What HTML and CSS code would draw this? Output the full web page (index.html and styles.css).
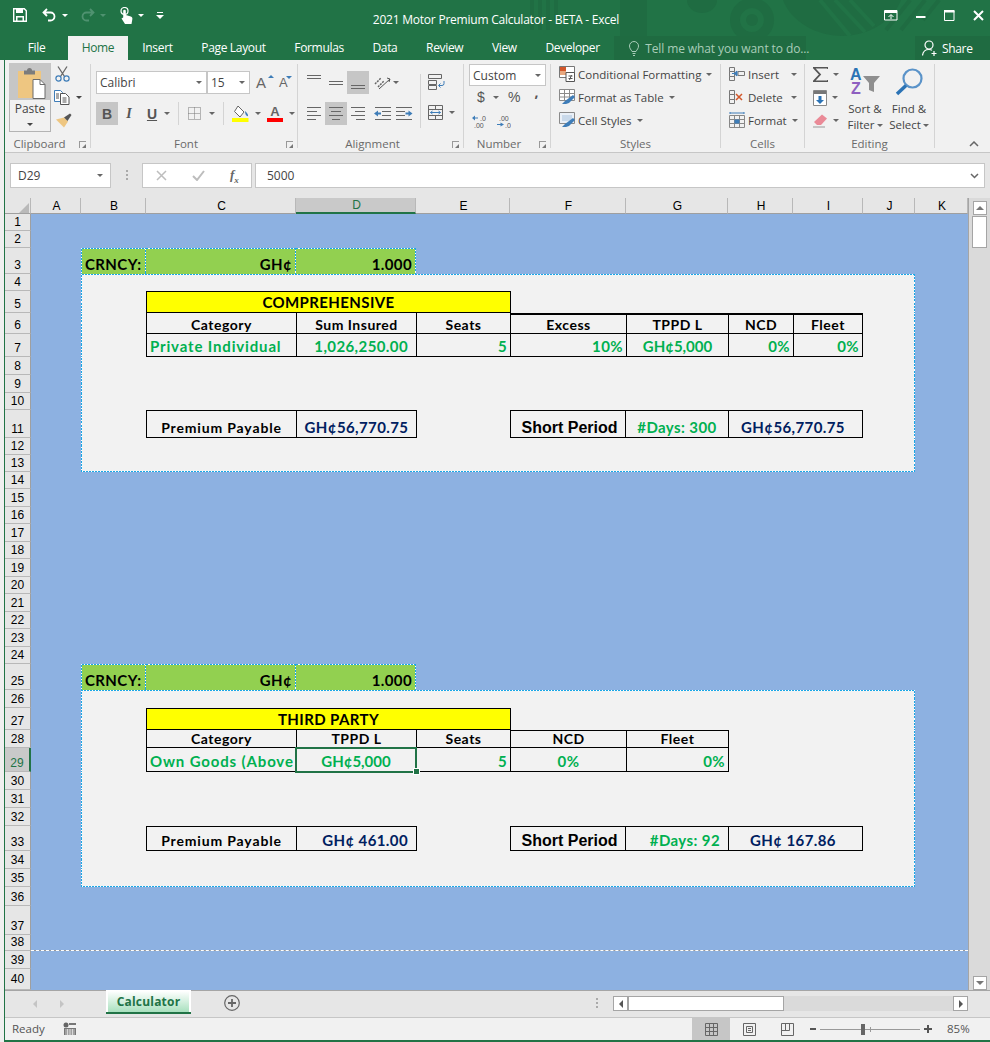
FILE: index.html
```html
<!DOCTYPE html>
<html lang="en">
<head>
  <meta charset="UTF-8" />
  <title>2021 Motor Premium Calculator - BETA - Excel</title>
  <link rel="stylesheet" href="styles.css">
</head>
<body>
  <div class="edge"></div>
  <div class="window">

    <!-- title bar -->
    <div class="titlebar">
      <svg class="pattern" width="985" height="36" viewBox="0 0 985 36">
        <g fill="#1f6c42">
          <path d="M525 0h4v30h-4zM533 0h4v30h-4zM541 0h4v30h-4zM549 0h4v20h-4z"/>
          <path d="M615 0h27v36h-27z"/>
          <path d="M682 0h30a15 13 0 0 1-30 0z"/>
          <path d="M747 -2a22 22 0 1 0 .1 0zM747 8a12 12 0 1 1-.1 0z"/>
          <circle cx="747" cy="20" r="6"/>
          <path d="M778 0h118c-8 22-34 36-59 36s-51-14-59-36z"/>
        </g>
        <g stroke="#217346" stroke-width="4" fill="none"><path d="M815 0l30 36M830 0l30 32M845 0l24 26"/></g>
        <g stroke="#1f6c42" stroke-width="4" fill="none"><path d="M905 0l-24 30M920 0l-24 30M934 0l-16 20"/></g>
      </svg>
      <div class="qat">
        <svg class="qat-save" width="14" height="14" viewBox="0 0 14 14"><path d="M.7.7h10.600l2 2v10.600H.7z" fill="none" stroke="#fff" stroke-width="1.400"/><path d="M3 1h7v4H3zM3 8h8v5H3z" fill="#fff"/><path d="M4.500 9.500h5v3h-5z" fill="#217346"/></svg>
        <svg class="qat-undo" width="15" height="14" viewBox="0 0 15 14"><path d="M5 1L1.500 4.500 5 8M2 4.500h6.500a4 4 0 0 1 0 8H6" fill="none" stroke="#fff" stroke-width="1.800"/></svg>
        <span class="caret caret-w qat-drop"></span>
        <svg class="qat-redo" width="15" height="14" viewBox="0 0 15 14"><path d="M10 1l3.500 3.500L10 8M13 4.500H6.500a4 4 0 0 0 0 8H9" fill="none" stroke="#4f9270" stroke-width="1.800"/></svg>
        <span class="caret caret-dim qat-drop"></span>
        <svg class="qat-touch" width="13" height="17" viewBox="0 0 13 17"><circle cx="4.500" cy="4" r="3.500" fill="none" stroke="#fff" stroke-width="1.200"/><path d="M3.200 4a1.300 1.300 0 0 1 2.600 0v4l5 1.500c1.500.5 1.800 1.500 1.500 3L11.500 17H5L1.500 11.500 3.200 10.500z" fill="#fff"/></svg>
        <span class="caret caret-w qat-drop"></span>
        <svg class="qat-more" width="8" height="7" viewBox="0 0 8 7"><path d="M1 .5h6" stroke="#fff"/><path d="M0 3h8L4 7z" fill="#fff"/></svg>
      </div>
      <div class="doc-title">2021 Motor Premium Calculator - BETA - Excel</div>
      <div class="win-btns">
        <svg width="14" height="11" viewBox="0 0 14 11"><path d="M.5.500h12.500v9.500H.5z" fill="none" stroke="#fff"/><path d="M1 1h12v2H1z" fill="#fff"/><path d="M4.500 7L7 4.500 9.500 7M7 5v4" fill="none" stroke="#fff"/></svg>
        <svg width="10" height="11" viewBox="0 0 10 11"><path d="M0 6h9.500v2H0z" fill="#fff"/></svg>
        <svg width="11" height="11" viewBox="0 0 11 11"><path d="M.5 1h9.500v9.500H.5z" fill="none" stroke="#fff"/><path d="M0 0h10.500v2.500H0z" fill="#fff"/></svg>
        <svg width="11" height="11" viewBox="0 0 11 11"><path d="M1 1l9 9M10 1l-9 9" stroke="#fff" stroke-width="2"/></svg>
      </div>
    </div>

    <!-- ribbon tabs -->
    <div class="tabs">
      <div class="tab tab-file">File</div>
      <div class="tab tab-active">Home</div>
      <div class="tab">Insert</div>
      <div class="tab">Page Layout</div>
      <div class="tab">Formulas</div>
      <div class="tab">Data</div>
      <div class="tab">Review</div>
      <div class="tab">View</div>
      <div class="tab">Developer</div>
      <div class="tellme">
        <svg width="10" height="15" viewBox="0 0 10 15"><path d="M3 10.500C2 8.500.5 7.500.5 5a4.500 4.500 0 0 1 9 0c0 2.500-1.500 3.500-2.500 5.500zM3.500 12.500h3M4 14.500h2" fill="none" stroke="#a9cdb9"/></svg>
        <span>Tell me what you want to do...</span>
      </div>
      <div class="share">
        <svg width="16" height="16" viewBox="0 0 16 16"><circle cx="7" cy="5" r="4" fill="none" stroke="#fff" stroke-width="1.200"/><path d="M.5 15.500c.5-4 3-6 6.500-6 1.200 0 2.200.3 3 .8M12 11v5M9.500 13.500h5" fill="none" stroke="#fff" stroke-width="1.200"/></svg>
        <span>Share</span>
      </div>
    </div>

    <!-- ribbon -->
    <div class="ribbon">

      <div class="group g-clipboard">
        <div class="group-body clip-body">
          <div class="paste">
            <div class="paste-top">
              <svg width="30" height="31" viewBox="0 0 30 31"><path d="M1 3h23v27H1z" fill="#eec681"/><path d="M7 1.500h3a2.500 2.500 0 0 1 5 0h3v4H7z" fill="#7c7c7c" transform="translate(0 1)"/><path d="M16 11.500h7l5 5v14H16z" fill="#fff" stroke="#6b6b6b"/><path d="M23 11.500v5h5" fill="none" stroke="#6b6b6b"/></svg>
            </div>
            <div class="paste-bottom"><span>Paste</span><span class="caret caret-d"></span></div>
          </div>
          <div class="clip-tools">
            <svg class="ci" width="15" height="16" viewBox="0 0 15 16"><path d="M3 .5l6.500 10M12 .5L5.500 10.500" stroke="#666" stroke-width="1.300" fill="none"/><circle cx="3.500" cy="12.500" r="2.600" fill="none" stroke="#3e7db8" stroke-width="1.200"/><circle cx="11.500" cy="12.500" r="2.600" fill="none" stroke="#3e7db8" stroke-width="1.200"/></svg>
            <div class="ci-row">
              <svg width="16" height="15" viewBox="0 0 16 15"><path d="M.5.500h6l2 2v9H.5z" fill="#fff" stroke="#3e7db8"/><path d="M6.500 3.500h5l3.500 3.500v7.500H6.500z" fill="#fff" stroke="#555"/><path d="M8.500 8h4M8.500 10h4M8.500 12h4M2 4h3M2 6h3M2 8h3" stroke="#555"/></svg>
              <span class="caret caret-d copy-drop"></span>
            </div>
            <svg class="ci" width="17" height="15" viewBox="0 0 17 15"><path d="M9 4l4 4-4 6-8-8z" fill="#eec681" transform="translate(0 .5)"/><path d="M9 4.500l6-4 1.500 1.500-4 6z" fill="#555"/></svg>
          </div>
        </div>
        <div class="group-label">Clipboard</div>
        <span class="launcher"></span>
      </div>

      <div class="group g-font">
        <div class="group-body font-body">
          <div class="tool-row">
            <div class="combo combo-font"><span>Calibri</span><span class="caret caret-g"></span></div>
            <div class="combo combo-size"><span>15</span><span class="caret caret-g"></span></div>
            <div class="font-grow">A<span class="caret caret-up"></span></div>
            <div class="font-shrink">A<span class="caret caret-blue"></span></div>
          </div>
          <div class="tool-row row-two">
            <div class="btn btn-on fmt-b">B</div>
            <div class="btn fmt-i">I</div>
            <div class="btn fmt-u">U</div>
            <span class="caret caret-g"></span>
            <span class="vsep vsep-a"></span>
            <svg class="borders" width="13" height="13" viewBox="0 0 13 13"><path d="M.5.500h12v12H.5zM6.500.500v12M.5 6.500h12" fill="none" stroke="#777" stroke-dasharray="1 1"/></svg>
            <span class="caret caret-g border-drop"></span>
            <span class="vsep vsep-b"></span>
            <svg class="fill-ic" width="17" height="17" viewBox="0 0 17 17"><path d="M6 1l6 6-4 5-5.500-5.500z" fill="#fff" stroke="#666"/><path d="M13 6c2 2 3 3 3 4.500S13 11 13 6z" fill="#3e7db8"/><path d="M0 13h16.500v4H0z" fill="#ffff00"/></svg>
            <span class="caret caret-g fill-drop"></span>
            <div class="color-a"><span>A</span><i></i></div>
            <span class="caret caret-g color-drop"></span>
          </div>
        </div>
        <div class="group-label">Font</div>
        <span class="launcher"></span>
      </div>

      <div class="group g-align">
        <div class="group-body align-body">
          <div class="align-main">
            <div class="tool-row">
              <div class="btn"><svg width="14" height="9" viewBox="0 0 14 9" class="v-top"><path d="M0 .5h14M0 3.500h14" stroke="#666"/></svg></div>
              <div class="btn"><svg width="14" height="9" viewBox="0 0 14 9"><path d="M0 3.500h14M0 6.500h14" stroke="#666"/></svg></div>
              <div class="btn btn-on"><svg width="14" height="9" viewBox="0 0 14 9" class="v-bot"><path d="M0 4.500h14M0 7.500h14" stroke="#666"/></svg></div>
              <div class="btn orient"><svg width="18" height="15" viewBox="0 0 18 15"><path d="M2 9l6-6M5 12l6-6" stroke="#666" stroke-width="1.500" stroke-dasharray="2 1"/><path d="M6 14L17 4M14 3l3 1-1 3" fill="none" stroke="#555"/></svg></div>
              <span class="caret caret-g"></span>
            </div>
            <div class="tool-row row-two">
              <div class="btn"><svg width="14" height="13" viewBox="0 0 14 13"><path d="M0 .5h14M0 4.500h10M0 8.500h14M0 12.500h9" stroke="#666"/></svg></div>
              <div class="btn btn-on"><svg width="14" height="13" viewBox="0 0 14 13"><path d="M0 .5h14M2 4.500h10M0 8.500h14M3 12.500h8" stroke="#666"/></svg></div>
              <div class="btn"><svg width="14" height="13" viewBox="0 0 14 13"><path d="M0 .5h14M4 4.500h10M0 8.500h14M5 12.500h9" stroke="#666"/></svg></div>
              <div class="btn btn-gap"><svg width="17" height="13" viewBox="0 0 17 13"><path d="M1 .5h16M8 4.500h9M8 8.500h9M1 12.500h16" stroke="#666"/><path d="M0 6.500l4-3v2h3v2H4v2z" fill="#3e7db8"/></svg></div>
              <div class="btn"><svg width="17" height="13" viewBox="0 0 17 13"><path d="M0 .5h16M0 4.500h9M0 8.500h9M0 12.500h16" stroke="#666"/><path d="M17 6.500l-4-3v2h-3v2h3v2z" fill="#3e7db8" transform="translate(-.5 0)"/></svg></div>
            </div>
          </div>
          <span class="vsep vsep-c"></span>
          <div class="align-side">
            <svg width="17" height="16" viewBox="0 0 17 16"><path d="M.5.500h13v4H.5zM.5 6.500h8v4H.5zM.5 11.500h8v4H.5z" fill="none" stroke="#666"/><path d="M16 7v2.500a2 2 0 0 1-2 2h-3M12.500 9.500l-2 2 2 2" fill="none" stroke="#3e7db8"/></svg>
            <div class="merge-row">
              <svg width="15" height="15" viewBox="0 0 15 15"><path d="M.5.500h14v14H.5zM.5 4.500h14M.5 10.500h14M7.500.5v4M7.500 10.500v4" fill="none" stroke="#666"/><path d="M2.500 7.500h10M4.500 6l-2 1.500 2 1.500M10.500 6l2 1.500-2 1.500" fill="none" stroke="#3e7db8"/></svg>
              <span class="caret caret-g"></span>
            </div>
          </div>
        </div>
        <div class="group-label">Alignment</div>
        <span class="launcher"></span>
      </div>

      <div class="group g-number">
        <div class="group-body number-body">
          <div class="combo combo-num"><span>Custom</span><span class="caret caret-g"></span></div>
          <div class="num-row">
            <span class="num-dollar">$</span><span class="caret caret-g"></span>
            <span class="num-pct">%</span><span class="num-comma">,</span>
          </div>
          <div class="num-row num-dec">
            <svg width="16" height="13" viewBox="0 0 16 13"><path d="M0 3l3-2.500v2h3v1H3v2z" fill="#3e7db8"/><text x="8" y="5.500" class="dec-text">.0</text><text x="2" y="12.500" class="dec-text">.00</text></svg>
            <svg width="14" height="13" viewBox="0 0 14 13"><text x="2" y="5.500" class="dec-text">.00</text><path d="M0 9h3.500V7.500L7 9.500l-3.500 2V10H0z" fill="#3e7db8"/><text x="8" y="12.500" class="dec-text">.0</text></svg>
          </div>
        </div>
        <div class="group-label">Number</div>
        <span class="launcher"></span>
      </div>

      <div class="group g-styles">
        <div class="group-body list-body">
          <div class="list-item">
            <svg width="16" height="16" viewBox="0 0 16 16"><path d="M.5.500h15v11H.5z" fill="#fff" stroke="#777"/><path d="M1 1h6v4H1z" fill="#d2572a"/><path d="M1 5h6v4H1z" fill="#e8a77e"/><path d="M7 6.500h8.500v9H7z" fill="#fff" stroke="#555"/><path d="M9.500 10h4M9.500 12.500h4M12.500 9l-2 5" stroke="#555"/></svg>
            <span>Conditional Formatting</span><span class="caret caret-g"></span>
          </div>
          <div class="list-item">
            <svg width="16" height="16" viewBox="0 0 16 16"><path d="M.5.500h15v11H.5zM.5 4.500h15M5.500.500v11M10.500.500v11M.5 8h15" fill="#fff" stroke="#8a8a8a"/><path d="M14 6l2 2-6 6-3 1H3l3-3z" fill="#3e7db8"/></svg>
            <span>Format as Table</span><span class="caret caret-g"></span>
          </div>
          <div class="list-item">
            <svg width="16" height="16" viewBox="0 0 16 16"><path d="M.5.500h15v11H.5z" fill="#eaf0f7" stroke="#8a8a8a"/><path d="M3 3h10v6H3z" fill="#c9d9ea"/><path d="M14 6l2 2-6 6-3 1H3l3-3z" fill="#3e7db8"/></svg>
            <span>Cell Styles</span><span class="caret caret-g"></span>
          </div>
        </div>
        <div class="group-label">Styles</div>
      </div>

      <div class="group g-cells">
        <div class="group-body list-body">
          <div class="list-item">
            <svg width="16" height="16" viewBox="0 0 16 16"><path d="M.5 1.500h5v4h-5zM.5 5.500h5v5h-5zM.5 10.500h5v4h-5zM5.500 5.500v5" fill="none" stroke="#777"/><path d="M9 5.500h6.500v4H9z" fill="none" stroke="#777"/><path d="M3 7.500h3M8 7.500l-3 0M8 5l-3 2.500 3 2.500z" fill="#3e7db8" stroke="#3e7db8"/></svg>
            <span class="cell-text">Insert</span><span class="caret caret-g"></span>
          </div>
          <div class="list-item">
            <svg width="16" height="16" viewBox="0 0 16 16"><path d="M.5 1.500h5v4h-5zM.5 5.500h5v5h-5zM.5 10.500h5v4h-5z" fill="none" stroke="#777"/><path d="M7 5l6 6M13 5l-6 6" stroke="#d2572a" stroke-width="1.500"/></svg>
            <span class="cell-text">Delete</span><span class="caret caret-g"></span>
          </div>
          <div class="list-item">
            <svg width="16" height="16" viewBox="0 0 16 16"><path d="M.5 3.500h15v12H.5zM.5 7.500h15M.5 11.500h15M5.500 3.500v12M10.500 3.500v12" fill="none" stroke="#888"/><path d="M5.500 7.500h5v4h-5z" fill="#3e7db8"/><path d="M1 1h14M1 0v2M15 0v2" stroke="#3e7db8"/></svg>
            <span>Format</span><span class="caret caret-g"></span>
          </div>
        </div>
        <div class="group-label">Cells</div>
      </div>

      <div class="group g-edit">
        <div class="group-body edit-body">
          <div class="edit-col">
            <div class="edit-row"><svg width="15" height="15" viewBox="0 0 15 15"><path d="M15 2V.5H.5L7 7.500.5 14.500H15V13" fill="none" stroke="#555" stroke-width="1.800"/></svg><span class="caret caret-g"></span></div>
            <div class="edit-row"><svg width="14" height="16" viewBox="0 0 14 16"><path d="M.5.500h13v15H.5z" fill="#fff" stroke="#888"/><path d="M1 1h12v3H1z" fill="#777"/><path d="M5.500 6h3v4H11l-4 4-4-4h2.500z" fill="#2b73b5"/></svg><span class="caret caret-g"></span></div>
            <div class="edit-row"><svg width="15" height="14" viewBox="0 0 15 14"><path d="M9 .5l5 4-6 6.500H4L1 8z" fill="#ea8a97"/><path d="M0 13h12" stroke="#999"/></svg><span class="caret caret-g"></span></div>
          </div>
          <div class="big-tool">
            <svg class="sort-ic" width="31" height="28" viewBox="0 0 31 28"><text x="0" y="12" class="az az-a">A</text><text x="1" y="26" class="az az-z">Z</text><path d="M13 8h17l-6 7v9l-5-2v-7z" fill="#8f8f8f"/></svg>
            <span>Sort &amp;</span>
            <span>Filter<i class="caret caret-g"></i></span>
          </div>
          <div class="big-tool find">
            <svg width="28" height="28" viewBox="0 0 28 28"><circle cx="17.500" cy="10.500" r="9" fill="none" stroke="#5a93c9" stroke-width="2.200"/><path d="M11 17.500L2 26" stroke="#2b73b5" stroke-width="3.500"/></svg>
            <span>Find &amp;</span>
            <span>Select<i class="caret caret-g"></i></span>
          </div>
        </div>
        <div class="group-label">Editing</div>
      </div>

      <svg class="collapse" width="10" height="6" viewBox="0 0 10 6"><path d="M1 5l4-4 4 4" fill="none" stroke="#666" stroke-width="1.500"/></svg>
    </div>

    <!-- formula bar -->
    <div class="formula">
      <div class="namebox"><span>D29</span><span class="caret caret-g"></span></div>
      <div class="grip"></div>
      <div class="fx-box">
        <svg width="11" height="11" viewBox="0 0 11 11"><path d="M1 1l9 9M10 1l-9 9" stroke="#bdbdbd" stroke-width="1.500"/></svg>
        <svg width="13" height="11" viewBox="0 0 13 11"><path d="M1 6l4 4 7-9" fill="none" stroke="#bdbdbd" stroke-width="2"/></svg>
        <span class="fx">f<sub>x</sub></span>
      </div>
      <div class="fx-input"><span>5000</span><svg width="9" height="6" viewBox="0 0 9 6"><path d="M1 1l3.500 3.500L8 1" fill="none" stroke="#666" stroke-width="1.500"/></svg></div>
    </div>

    <!-- sheet -->
    <div class="sheet-wrap">
      <table class="sheet">
        <colgroup>
          <col class="c-rh"><col class="c-a"><col class="c-b"><col class="c-c"><col class="c-d"><col class="c-e"><col class="c-f"><col class="c-g"><col class="c-h"><col class="c-i"><col class="c-j"><col class="c-k">
        </colgroup>
        <tr class="r16">
          <td class="ch corner"><svg width="10" height="10" viewBox="0 0 10 10"><path d="M10 0v10H0z" fill="#b9b9b9"/></svg></td>
          <td class="ch">A</td><td class="ch">B</td><td class="ch">C</td><td class="ch ch-on">D</td><td class="ch">E</td><td class="ch">F</td><td class="ch">G</td><td class="ch">H</td><td class="ch">I</td><td class="ch">J</td><td class="ch">K</td>
        </tr>
        <tr class="r17"><td class="rh">1</td><td colspan="11"></td></tr>
        <tr class="r17"><td class="rh">2</td><td colspan="11"></td></tr>
        <tr class="r26">
          <td class="rh">3</td><td></td>
          <td class="cur dt dl dr">CRNCY:</td><td class="cur dt dr right">GH¢</td><td class="cur dt dr right">1.000</td>
          <td colspan="7"></td>
        </tr>
        <tr class="r17"><td class="rh">4</td><td></td><td class="pan dt dl dr" colspan="9"></td><td></td></tr>
        <tr class="r22">
          <td class="rh">5</td><td></td><td class="pan dl"></td>
          <td class="banner bt bl bb" colspan="3">COMPREHENSIVE</td>
          <td class="pan bl" colspan="4"></td><td class="pan dr"></td><td></td>
        </tr>
        <tr class="r21">
          <td class="rh">6</td><td></td><td class="pan dl"></td>
          <td class="hd bl bb">Category</td><td class="hd bl bb">Sum Insured</td><td class="hd bl bb">Seats</td>
          <td class="hd bt2 bl bb">Excess</td><td class="hd bt2 bl bb">TPPD L</td><td class="hd bt2 bl bb">NCD</td><td class="hd bt2 bl bb br">Fleet</td>
          <td class="pan dr"></td><td></td>
        </tr>
        <tr class="r23">
          <td class="rh">7</td><td></td><td class="pan dl"></td>
          <td class="val wide bl bb">Private Individual</td><td class="val bl bb right pad8">1,026,250.00</td><td class="val bl bb right">5</td>
          <td class="val bl bb right">10%</td><td class="val tight bl bb center">GH¢5,000</td><td class="val bl bb right">0%</td><td class="val bl bb br right">0%</td>
          <td class="pan dr"></td><td></td>
        </tr>
        <tr class="r18"><td class="rh">8</td><td></td><td class="pan dl dr" colspan="9"></td><td></td></tr>
        <tr class="r18"><td class="rh">9</td><td></td><td class="pan dl dr" colspan="9"></td><td></td></tr>
        <tr class="r17"><td class="rh">10</td><td></td><td class="pan dl dr" colspan="9"></td><td></td></tr>
        <tr class="r28">
          <td class="rh">11</td><td></td><td class="pan dl"></td>
          <td class="lbl wide bt bl bb center">Premium Payable</td><td class="total bt bl bb center">GH¢56,770.75</td>
          <td class="pan bl"></td>
          <td class="period bx center">Short Period</td><td class="val bt bb center">#Days: 300</td><td class="total bt bl bb br center pad8" colspan="2">GH¢56,770.75</td>
          <td class="pan dr"></td><td></td>
        </tr>
        <tr class="r17"><td class="rh">12</td><td></td><td class="pan dl dr" colspan="9"></td><td></td></tr>
        <tr class="r17"><td class="rh">13</td><td></td><td class="pan dl dr db" colspan="9"></td><td></td></tr>
        <tr class="r17"><td class="rh">14</td><td colspan="11"></td></tr>
        <tr class="r18"><td class="rh">15</td><td colspan="11"></td></tr>
        <tr class="r17"><td class="rh">16</td><td colspan="11"></td></tr>
        <tr class="r18"><td class="rh">17</td><td colspan="11"></td></tr>
        <tr class="r17"><td class="rh">18</td><td colspan="11"></td></tr>
        <tr class="r18"><td class="rh">19</td><td colspan="11"></td></tr>
        <tr class="r17"><td class="rh">20</td><td colspan="11"></td></tr>
        <tr class="r18"><td class="rh">21</td><td colspan="11"></td></tr>
        <tr class="r17"><td class="rh">22</td><td colspan="11"></td></tr>
        <tr class="r18"><td class="rh">23</td><td colspan="11"></td></tr>
        <tr class="r17"><td class="rh">24</td><td colspan="11"></td></tr>
        <tr class="r26">
          <td class="rh">25</td><td></td>
          <td class="cur dt dl dr">CRNCY:</td><td class="cur dt dr right">GH¢</td><td class="cur dt dr right">1.000</td>
          <td colspan="7"></td>
        </tr>
        <tr class="r18"><td class="rh">26</td><td></td><td class="pan dt dl dr" colspan="9"></td><td></td></tr>
        <tr class="r22">
          <td class="rh">27</td><td></td><td class="pan dl"></td>
          <td class="banner bt bl bb" colspan="3">THIRD PARTY</td>
          <td class="pan bl" colspan="4"></td><td class="pan dr"></td><td></td>
        </tr>
        <tr class="r18">
          <td class="rh">28</td><td></td><td class="pan dl"></td>
          <td class="hd bl bb">Category</td><td class="hd bl bb">TPPD L</td><td class="hd bl bb">Seats</td>
          <td class="hd bt bl bb">NCD</td><td class="hd bt bl bb">Fleet</td>
          <td class="pan bl" colspan="2"></td><td class="pan dr"></td><td></td>
        </tr>
        <tr class="r24">
          <td class="rh rh-on">29</td><td></td><td class="pan dl"></td>
          <td class="val wide bl bb">Own Goods (Above</td><td class="val tight bb center active">GH¢5,000<span class="handle"></span></td><td class="val bl bb right">5</td>
          <td class="val bl bb center">0%</td><td class="val bl bb right">0%</td>
          <td class="pan bl" colspan="2"></td><td class="pan dr"></td><td></td>
        </tr>
        <tr class="r18"><td class="rh">30</td><td></td><td class="pan dl dr" colspan="9"></td><td></td></tr>
        <tr class="r18"><td class="rh">31</td><td></td><td class="pan dl dr" colspan="9"></td><td></td></tr>
        <tr class="r18"><td class="rh">32</td><td></td><td class="pan dl dr" colspan="9"></td><td></td></tr>
        <tr class="r25">
          <td class="rh">33</td><td></td><td class="pan dl"></td>
          <td class="lbl wide bt bl bb center">Premium Payable</td><td class="total bt bl bb right pad8">GH¢ 461.00</td>
          <td class="pan bl"></td>
          <td class="period bx center">Short Period</td><td class="val bt bb right pad8">#Days: 92</td><td class="total bt bl bb br center pad8" colspan="2">GH¢ 167.86</td>
          <td class="pan dr"></td><td></td>
        </tr>
        <tr class="r18"><td class="rh">34</td><td></td><td class="pan dl dr" colspan="9"></td><td></td></tr>
        <tr class="r18"><td class="rh">35</td><td></td><td class="pan dl dr db" colspan="9"></td><td></td></tr>
        <tr class="r19"><td class="rh">36</td><td colspan="11"></td></tr>
        <tr class="r29"><td class="rh">37</td><td colspan="11"></td></tr>
        <tr class="r16"><td class="rh">38</td><td class="page-break" colspan="11"></td></tr>
        <tr class="r18"><td class="rh">39</td><td colspan="11"></td></tr>
        <tr class="r21"><td class="rh rh-last">40</td><td colspan="11"></td></tr>
      </table>
      <div class="vscroll">
        <div class="sb-btn"><span class="caret caret-up-g"></span></div>
        <div class="sb-thumb"></div>
        <div class="sb-track"></div>
        <div class="sb-btn"><span class="caret caret-d-g"></span></div>
      </div>
    </div>

    <!-- sheet tabs -->
    <div class="tabbar">
      <span class="nav-l"></span><span class="nav-r"></span>
      <div class="sheet-tab"><span>Calculator</span></div>
      <svg class="add-sheet" width="16" height="16" viewBox="0 0 16 16"><circle cx="8" cy="8" r="7.300" fill="none" stroke="#666" stroke-width="1.200"/><path d="M8 4v8M4 8h8" stroke="#666" stroke-width="1.800"/></svg>
      <div class="hgrip"></div>
      <div class="hscroll">
        <div class="hs-btn"><span class="tri-l"></span></div>
        <div class="hs-thumb"></div>
        <div class="hs-track"></div>
        <div class="hs-btn"><span class="tri-r"></span></div>
      </div>
    </div>

    <!-- status bar -->
    <div class="status">
      <span class="ready">Ready</span>
      <svg class="macro" width="13" height="13" viewBox="0 0 13 13"><circle cx="3" cy="3" r="2.500" fill="#666"/><path d="M6 1h7v2H6zM1 6h12v7H1z" fill="#777"/><path d="M2 8h10M2 10h10M2 12h10M4.500 7v6M7 7v6M9.500 7v6" stroke="#f1f1f1" stroke-width=".7"/></svg>
      <div class="views">
        <div class="view view-on"><svg width="13" height="13" viewBox="0 0 13 13"><path d="M.5.500h12v12H.5zM4.500.500v12M8.500.500v12M.5 4.500h12M.5 8.500h12" fill="none" stroke="#666"/></svg></div>
        <div class="view"><svg width="13" height="13" viewBox="0 0 13 13"><path d="M.5.500h12v12H.5z" fill="none" stroke="#666"/><path d="M3.500 3.500h6v6h-6zM5 5.500h3M5 7.500h3" fill="none" stroke="#666"/></svg></div>
        <div class="view"><svg width="13" height="13" viewBox="0 0 13 13"><path d="M.5.500h12v12H.5zM.5 7.500h8V.5M4.500.500v7" fill="none" stroke="#666"/></svg></div>
      </div>
      <div class="zoom-ctl">
        <span class="z-minus"></span>
        <div class="z-slider"><i class="z-thumb"></i><i class="z-tick"></i></div>
        <span class="z-plus"></span>
      </div>
      <span class="pct">85%</span>
    </div>
  </div>
</body>
</html>
```

FILE: styles.css
```css
* {
  box-sizing: border-box;
}

body {
  margin: 0;
  width: 990px;
  height: 1042px;
  overflow: hidden;
  display: flex;
  font-family: "Open Sans", sans-serif;
  color: #444;
  background: #f4f4f4;
}

svg {
  display: block;
  flex: none;
}

.edge {
  width: 4px;
  background: linear-gradient(to bottom, #217346 60px, #f0f0f0 60px);
}

.window {
  width: 986px;
  height: 1042px;
  display: flex;
  flex-direction: column;
  border-left: 1px solid #217346;
}

/* carets */
.caret {
  display: inline-block;
  flex: none;
  width: 0;
  height: 0;
  border-left: 3px solid transparent;
  border-right: 3px solid transparent;
  border-top: 3px solid #666;
}
.caret-w { border-top-color: #fff; }
.caret-dim { border-top-color: #4f9270; }
.caret-d { border-top-color: #444; }
.caret-up-g {
  border-top: 0;
  border-bottom: 4px solid #777;
  border-left-width: 4px;
  border-right-width: 4px;
}
.caret-d-g {
  border-top: 4px solid #777;
  border-left-width: 4px;
  border-right-width: 4px;
}

/* title bar */
.titlebar {
  position: relative;
  height: 36px;
  flex: none;
  background: #217346;
  display: grid;
  grid-template-columns: 1fr auto 1fr;
  color: #fff;
}
.pattern {
  position: absolute;
  top: 0;
  left: 0;
}
.qat {
  position: relative;
  display: flex;
  align-items: center;
  height: 30px;
  padding-left: 8px;
}
.qat-undo { margin-left: 15px; }
.qat-redo { margin-left: 12px; }
.qat-touch { margin-left: 14px; }
.qat-drop { margin-left: 5px; }
.qat-more { margin-left: 12px; }

.doc-title {
  position: relative;
  padding-right: 3px;
  font-size: 12px;
  line-height: 40px;
  letter-spacing: -.23px;
}
.win-btns {
  position: relative;
  display: flex;
  align-items: center;
  justify-content: flex-end;
  gap: 18px;
  height: 30px;
  padding-right: 6px;
}

/* tabs */
.tabs {
  height: 24px;
  flex: none;
  display: flex;
  background: #217346;
  font-size: 12px;
  letter-spacing: -.33px;
  color: #fff;
}
.tab {
  padding: 0 14.300px;
  line-height: 24px;
}
.tab-file {
  width: 63px;
  text-align: center;
  padding: 0;
}
.tab-active {
  background: #f1f1f1;
  color: #217346;
  width: 60px;
  text-align: center;
  padding: 0;
}
.tellme {
  display: flex;
  align-items: center;
  gap: 6px;
  width: 192px;
  padding-left: 15px;
  background: #1f6b41;
  color: #a9cdb9;
  white-space: nowrap;
  letter-spacing: -.1px;
}
.share {
  margin-left: auto;
  width: 75px;
  display: flex;
  align-items: center;
  gap: 4px;
  padding-left: 7px;
  background: #1f6b41;
}

/* ribbon */
.ribbon {
  position: relative;
  height: 93px;
  flex: none;
  display: flex;
  padding-top: 4px;
  background: #f1f1f1;
  border-bottom: 1px solid #c6c6c6;
  font-size: 12px;
}
.group {
  position: relative;
  height: 84px;
  display: flex;
  flex-direction: column;
  border-right: 1px solid #d4d4d4;
}
.group-body {
  flex: 1;
  min-height: 0;
}
.group-label {
  height: 16px;
  margin-bottom: -4px;
  line-height: 16px;
  text-align: center;
  font-size: 11.500px;
  color: #6a6a6a;
}
.g-clipboard .group-label,
.g-font .group-label,
.g-align .group-label,
.g-number .group-label {
  padding-right: 16px;
}
.launcher {
  position: absolute;
  right: 4px;
  bottom: 0;
  width: 7px;
  height: 7px;
  border-left: 1px solid #999;
  border-top: 1px solid #999;
}
.launcher::after {
  content: "";
  position: absolute;
  right: 0;
  bottom: 0;
  border-left: 4px solid transparent;
  border-bottom: 4px solid #777;
}
.g-clipboard { width: 86px; }
.g-font { width: 207px; }
.g-align { width: 166px; }
.g-number { width: 87px; }
.g-styles { width: 170px; }
.g-cells { width: 84px; }
.g-edit { width: 130px; }

.tool-row {
  display: flex;
  align-items: center;
  height: 23px;
}
.row-two { margin-top: 8px; }

.btn {
  width: 22px;
  height: 23px;
  flex: none;
  display: flex;
  align-items: center;
  justify-content: center;
  font-family: "Liberation Serif", serif;
  font-size: 14px;
  color: #555;
}
.btn-on { background: #c6c6c6; }
.btn-gap { margin-left: 2px; }
.v-top { margin-bottom: 6px; }
.v-bot { margin-top: 6px; }
.fmt-b {
  font-family: "Liberation Sans", sans-serif;
  font-weight: bold;
}
.fmt-i { font-style: italic; font-weight: bold; }
.fmt-u {
  width: 24px;
  font-family: "Liberation Sans", sans-serif;
  font-weight: bold;
  text-decoration: underline;
}

.vsep {
  width: 1px;
  height: 23px;
  flex: none;
  background: #d4d4d4;
}
.vsep-a { margin-left: 8px; }
.vsep-b { margin-left: 8px; }
.vsep-c { height: 54px; margin: 3px 4px 0 0; }

/* clipboard */
.clip-body {
  display: flex;
  padding-left: 4px;
}
.paste {
  width: 42px;
  height: 69px;
  margin-top: -1px;
}
.paste-top {
  height: 37px;
  padding: 5px 0 0 8px;
  background: #c6c6c6;
}
.paste-bottom {
  height: 32px;
  display: flex;
  flex-direction: column;
  align-items: center;
  gap: 6px;
  padding-top: 1px;
  border: 1px solid #b4b4b4;
  border-top: 0;
  line-height: 16px;
}
.clip-tools {
  display: flex;
  flex-direction: column;
  align-items: flex-start;
  gap: 8px;
  padding: 2px 0 0 3px;
}
.clip-tools .ci { margin-left: 1px; }
.ci-row {
  display: flex;
  align-items: center;
}
.copy-drop { margin-left: 6px; }

/* font */
.font-body { padding: 7px 0 0 5px; }
.combo {
  height: 23px;
  display: flex;
  align-items: center;
  justify-content: space-between;
  background: #fff;
  border: 1px solid #c6c6c6;
  padding: 0 4px 0 3px;
}
.combo-font { width: 111px; }
.combo-size { width: 43px; }
.font-grow,
.font-shrink {
  position: relative;
  font-family: "Liberation Sans", sans-serif;
  color: #666;
}
.font-grow { margin-left: 6px; width: 18px; font-size: 15px; }
.font-shrink { margin-left: 5px; width: 13px; font-size: 13px; }
.font-grow .caret,
.font-shrink .caret {
  position: absolute;
  top: 1px;
  right: 0;
}
.caret-up {
  border-top: 0;
  border-bottom: 3px solid #3e7db8;
}
.caret-blue { border-top-color: #3e7db8; }

.borders { margin-left: 9px; }
.border-drop { margin-left: 8px; }
.fill-ic { margin-left: 8px; }
.fill-drop { margin-left: 6px; }
.color-a {
  margin-left: 6px;
  width: 16px;
  text-align: center;
  font-family: "Liberation Sans", sans-serif;
  font-weight: bold;
  font-size: 13px;
  line-height: 13px;
  color: #666;
}
.color-a i {
  display: block;
  height: 4px;
  background: #f00;
}
.color-drop { margin-left: 6px; }

/* alignment */
.align-body {
  display: flex;
  padding: 7px 0 0 5px;
}
.align-main { width: 117px; }
.orient { margin-left: 2px; }
.align-side {
  display: flex;
  flex-direction: column;
  gap: 15px;
  padding-top: 3px;
  margin-left: 3px;
}
.merge-row {
  display: flex;
  align-items: center;
  gap: 6px;
}

/* number */
.number-body { padding-left: 5px; }
.combo-num {
  width: 77px;
  height: 22px;
  font-size: 12px;
}
.num-row {
  display: flex;
  align-items: center;
  height: 22px;
  margin-top: 0;
  padding-left: 8px;
  font-size: 14px;
  color: #555;
}
.num-dollar { width: 16px; font-family: "Liberation Sans", sans-serif; }
.num-pct { margin-left: 9px; font-family: "Liberation Sans", sans-serif; }
.num-comma {
  margin: -10px 0 0 14px;
  font-weight: bold;
  line-height: 12px;
}
.num-dec {
  padding-left: 3px;
  gap: 9px;
  margin-top: 2px;
}
.dec-text {
  font-family: "Liberation Sans", sans-serif;
  font-size: 7px;
  fill: #555;
}

/* lists in styles and cells */
.list-body {
  display: flex;
  flex-direction: column;
  gap: 7px;
  padding: 2px 0 0 8px;
}
.list-item {
  display: flex;
  align-items: center;
  gap: 3px;
  height: 16px;
  white-space: nowrap;
  font-size: 11.500px;
}
.list-item .caret { margin-left: 2px; }
.cell-text { width: 38px; }

/* editing */
.edit-body {
  display: flex;
  padding-left: 8px;
}
.edit-col {
  display: flex;
  flex-direction: column;
  gap: 8px;
  padding-top: 3px;
  width: 30px;
}
.edit-row {
  display: flex;
  align-items: center;
  gap: 5px;
  height: 15px;
}
.big-tool {
  display: flex;
  flex-direction: column;
  align-items: center;
  width: 44px;
  padding-top: 4px;
  font-size: 11.500px;
  line-height: 16px;
  white-space: nowrap;
}
.big-tool svg { margin-bottom: 5px; }
.big-tool .caret {
  margin-left: 2px;
  vertical-align: 2px;
}
.sort-ic { overflow: visible; }
.az {
  font-family: "Liberation Sans", sans-serif;
  font-weight: bold;
  font-size: 16px;
}
.az-a { fill: #2b73b5; }
.az-z { fill: #8e5fc0; }
.collapse {
  position: absolute;
  right: 11px;
  bottom: 5px;
}

/* formula bar */
.formula {
  height: 45px;
  flex: none;
  display: flex;
  padding: 10px 5px 0 5px;
  background: #e6e6e6;
  font-size: 12px;
}
.namebox {
  width: 101px;
  height: 25px;
  display: flex;
  align-items: center;
  justify-content: space-between;
  padding: 0 7px;
  background: #fff;
  border: 1px solid #c6c6c6;
}
.grip {
  width: 2px;
  height: 11px;
  margin: 7px 14px 0 15px;
  background: repeating-linear-gradient(to bottom, #aaa 0 2px, transparent 2px 4px);
}
.fx-box {
  width: 110px;
  height: 25px;
  display: flex;
  align-items: center;
  gap: 25px;
  padding-left: 13px;
  background: #fff;
  border: 1px solid #c6c6c6;
}
.fx {
  font-family: "Liberation Serif", serif;
  font-style: italic;
  font-weight: bold;
  font-size: 13px;
  color: #666;
}
.fx sub { font-size: 9px; }
.fx-input {
  flex: 1;
  height: 25px;
  display: flex;
  align-items: center;
  justify-content: space-between;
  margin-left: 3px;
  padding: 0 5px 0 11px;
  background: #fff;
  border: 1px solid #c6c6c6;
}

/* sheet */
.sheet-wrap {
  height: 792px;
  flex: none;
  display: flex;
}
.sheet {
  width: 963px;
  table-layout: fixed;
  border-collapse: separate;
  border-spacing: 0;
  background: #8db1e1;
  font-family: Lato, sans-serif;
  font-weight: bold;
  font-size: 15px;
  letter-spacing: .4px;
  color: #000;
}
.c-rh { width: 26px; }
.c-a { width: 50px; }
.c-b { width: 65px; }
.c-c { width: 150px; }
.c-d { width: 120px; }
.c-e { width: 94px; }
.c-f { width: 116px; }
.c-g { width: 102px; }
.c-h { width: 65px; }
.c-i { width: 70px; }
.c-j { width: 52px; }
.c-k { width: 53px; }

.r16 { height: 16px; }
.r17 { height: 17px; }
.r18 { height: 18px; }
.r19 { height: 19px; }
.r21 { height: 21px; }
.r22 { height: 22px; }
.r23 { height: 23px; }
.r24 { height: 24px; }
.r25 { height: 25px; }
.r26 { height: 26px; }
.r28 { height: 28px; }
.r29 { height: 29px; }

.sheet td {
  padding: 0 3px 1px;
  overflow: hidden;
  white-space: nowrap;
  vertical-align: bottom;
  line-height: 17px;
}
.sheet .ch {
  padding: 0 0 0 2px;
  background: #e6e6e6;
  border-right: 1px solid #b8b8b8;
  border-bottom: 1px solid #9f9f9f;
  text-align: center;
  font-family: "Liberation Sans", sans-serif;
  font-weight: normal;
  font-size: 12px;
  line-height: 14px;
  letter-spacing: 0;
}
.sheet .ch-on {
  background: #c9c9c9;
  color: #217346;
  border-bottom: 2px solid #217346;
}
.sheet .corner svg { margin-left: 12px; }
.sheet .rh {
  padding: 0 0 1px;
  background: #e6e6e6;
  border-right: 1px solid #9f9f9f;
  border-bottom: 1px solid #b8b8b8;
  text-align: center;
  font-family: "Liberation Sans", sans-serif;
  font-weight: normal;
  font-size: 12px;
  line-height: 14px;
  letter-spacing: 0;
}
.sheet .rh-on {
  background: #c9c9c9;
  color: #217346;
  border-right: 2px solid #217346;
}
.sheet .rh-last { padding-bottom: 3px; }

.cur { background: #92d050; }
.pan { background: #f2f2f2; }
.banner {
  background: #ff0;
  text-align: center;
}
.sheet .hd {
  padding-bottom: 0;
  background: #f2f2f2;
  text-align: center;
  font-size: 14px;
  line-height: 16px;
  letter-spacing: .5px;
}
.lbl {
  background: #f2f2f2;
  font-size: 14px;
}
.val {
  background: #f2f2f2;
  color: #00b050;
}
.total {
  background: #f2f2f2;
  color: #002060;
}
.sheet .period {
  padding-left: 6px;
  background: #f2f2f2;
  font-family: "Liberation Sans", sans-serif;
  font-size: 16px;
  letter-spacing: 0;
}
.wide { letter-spacing: .85px; }
.tight { letter-spacing: 0; }
.right { text-align: right; }
.center { text-align: center; }
.sheet .pad8 { padding-right: 8px; }

/* black cell borders */
.bx { border: 1px solid #000; }
.bt { border-top: 1px solid #000; }
.bl { border-left: 1px solid #000; }
.br { border-right: 1px solid #000; }
.bb { border-bottom: 1px solid #000; }
.bt2 { border-top: 2px solid #000; }

/* print area outline */
.dt,
.db,
.dl,
.dr {
  border-style: solid;
  border-width: 0;
  border-image: repeating-linear-gradient(45deg, #1aa7e6 0 1.410px, #fff 1.410px 2.120px) 1;
}
.dt { border-top-width: 1px; }
.db { border-bottom-width: 1px; }
.dl { border-left-width: 1px; }
.dr { border-right-width: 1px; }

.page-break {
  background: linear-gradient(#9a9a9a, #9a9a9a) bottom / 100% 1px no-repeat;
  background-origin: border-box;
  border-bottom: 1px dashed #fff;
}

/* active cell */
.sheet .active {
  position: relative;
  overflow: visible;
  outline: 2px solid #217346;
  outline-offset: -1px;
}
.handle {
  position: absolute;
  right: -3px;
  bottom: -3px;
  width: 5px;
  height: 5px;
  background: #217346;
  border: 1px solid #fff;
  box-sizing: content-box;
  margin: -1px;
}

/* scrollbars */
.vscroll {
  width: 22px;
  display: flex;
  flex-direction: column;
  align-items: center;
  padding: 3px 0 0;
  background: #dadada;
  border-left: 1px solid #a5a5a5;
}
.sb-btn {
  width: 14px;
  height: 14px;
  flex: none;
  display: flex;
  align-items: center;
  justify-content: center;
  background: #fff;
  border: 1px solid #a5a5a5;
}
.sb-thumb {
  width: 15px;
  height: 32px;
  flex: none;
  margin-top: 1px;
  background: #fff;
  border: 1px solid #a5a5a5;
}
.sb-track { flex: 1; }

/* sheet tabs */
.tabbar {
  position: relative;
  height: 27px;
  flex: none;
  display: flex;
  align-items: flex-start;
  background: #e6e6e6;
  border-top: 1px solid #a5a5a5;
}
.nav-l,
.nav-r {
  width: 0;
  height: 0;
  margin-top: 9px;
  border-top: 4px solid transparent;
  border-bottom: 4px solid transparent;
}
.nav-l {
  margin-left: 28px;
  border-right: 4px solid #c4c4c4;
}
.nav-r {
  margin-left: 23px;
  border-left: 4px solid #c4c4c4;
}
.sheet-tab {
  width: 85px;
  height: 24px;
  margin: -1px 0 0 42px;
  padding: 1px 2px 0;
  background: #fff;
  border-bottom: 2px solid #217346;
}
.sheet-tab span {
  display: block;
  height: 21px;
  background: linear-gradient(to bottom, #fff, #a8e0be);
  text-align: center;
  font-size: 12px;
  font-weight: bold;
  line-height: 22px;
  letter-spacing: .2px;
  color: #217346;
}
.add-sheet {
  margin: 4px 0 0 33px;
}
.hgrip {
  width: 2px;
  height: 10px;
  margin: 7px 0 0 356px;
  background: repeating-linear-gradient(to bottom, #aaa 0 2px, transparent 2px 4px);
}
.hscroll {
  width: 355px;
  height: 15px;
  margin: 5px 0 0 15px;
  display: flex;
  background: #dadada;
}
.hs-btn {
  width: 15px;
  flex: none;
  display: flex;
  align-items: center;
  justify-content: center;
  background: #fff;
  border: 1px solid #a5a5a5;
}
.hs-thumb {
  width: 156px;
  flex: none;
  background: #fff;
  border: 1px solid #a5a5a5;
}
.hs-track { flex: 1; }
.tri-l,
.tri-r {
  width: 0;
  height: 0;
  border-top: 4px solid transparent;
  border-bottom: 4px solid transparent;
}
.tri-l { border-right: 4px solid #555; }
.tri-r { border-left: 4px solid #555; }

/* status bar */
.status {
  height: 25px;
  flex: none;
  display: flex;
  align-items: flex-start;
  background: #f1f1f1;
  border-top: 1px solid #c6c6c6;
  border-bottom: 2px solid #217346;
  font-size: 11.500px;
  line-height: 22px;
  color: #555;
}
.ready { margin-left: 7px; width: 51px; }
.macro { margin-top: 4px; }
.views {
  display: flex;
  margin-left: 616px;
}
.view {
  width: 38px;
  height: 22px;
  display: flex;
  align-items: center;
  justify-content: center;
}
.view-on { background: #c6c6c6; }
.zoom-ctl {
  display: flex;
  align-items: center;
  height: 22px;
  margin-left: 4px;
}
.z-minus {
  width: 6px;
  height: 2px;
  background: #555;
}
.z-slider {
  position: relative;
  width: 100px;
  height: 1px;
  margin: 0 4px;
  background: #999;
}
.z-thumb {
  position: absolute;
  left: 41px;
  top: -5px;
  width: 4px;
  height: 11px;
  background: #666;
}
.z-tick {
  position: absolute;
  left: 50px;
  top: -2px;
  width: 1px;
  height: 5px;
  background: #999;
}
.z-plus {
  width: 8px;
  height: 8px;
  background: linear-gradient(#555, #555) center / 100% 2px no-repeat, linear-gradient(#555, #555) center / 2px 100% no-repeat;
}
.pct { margin-left: 15px; }
```
